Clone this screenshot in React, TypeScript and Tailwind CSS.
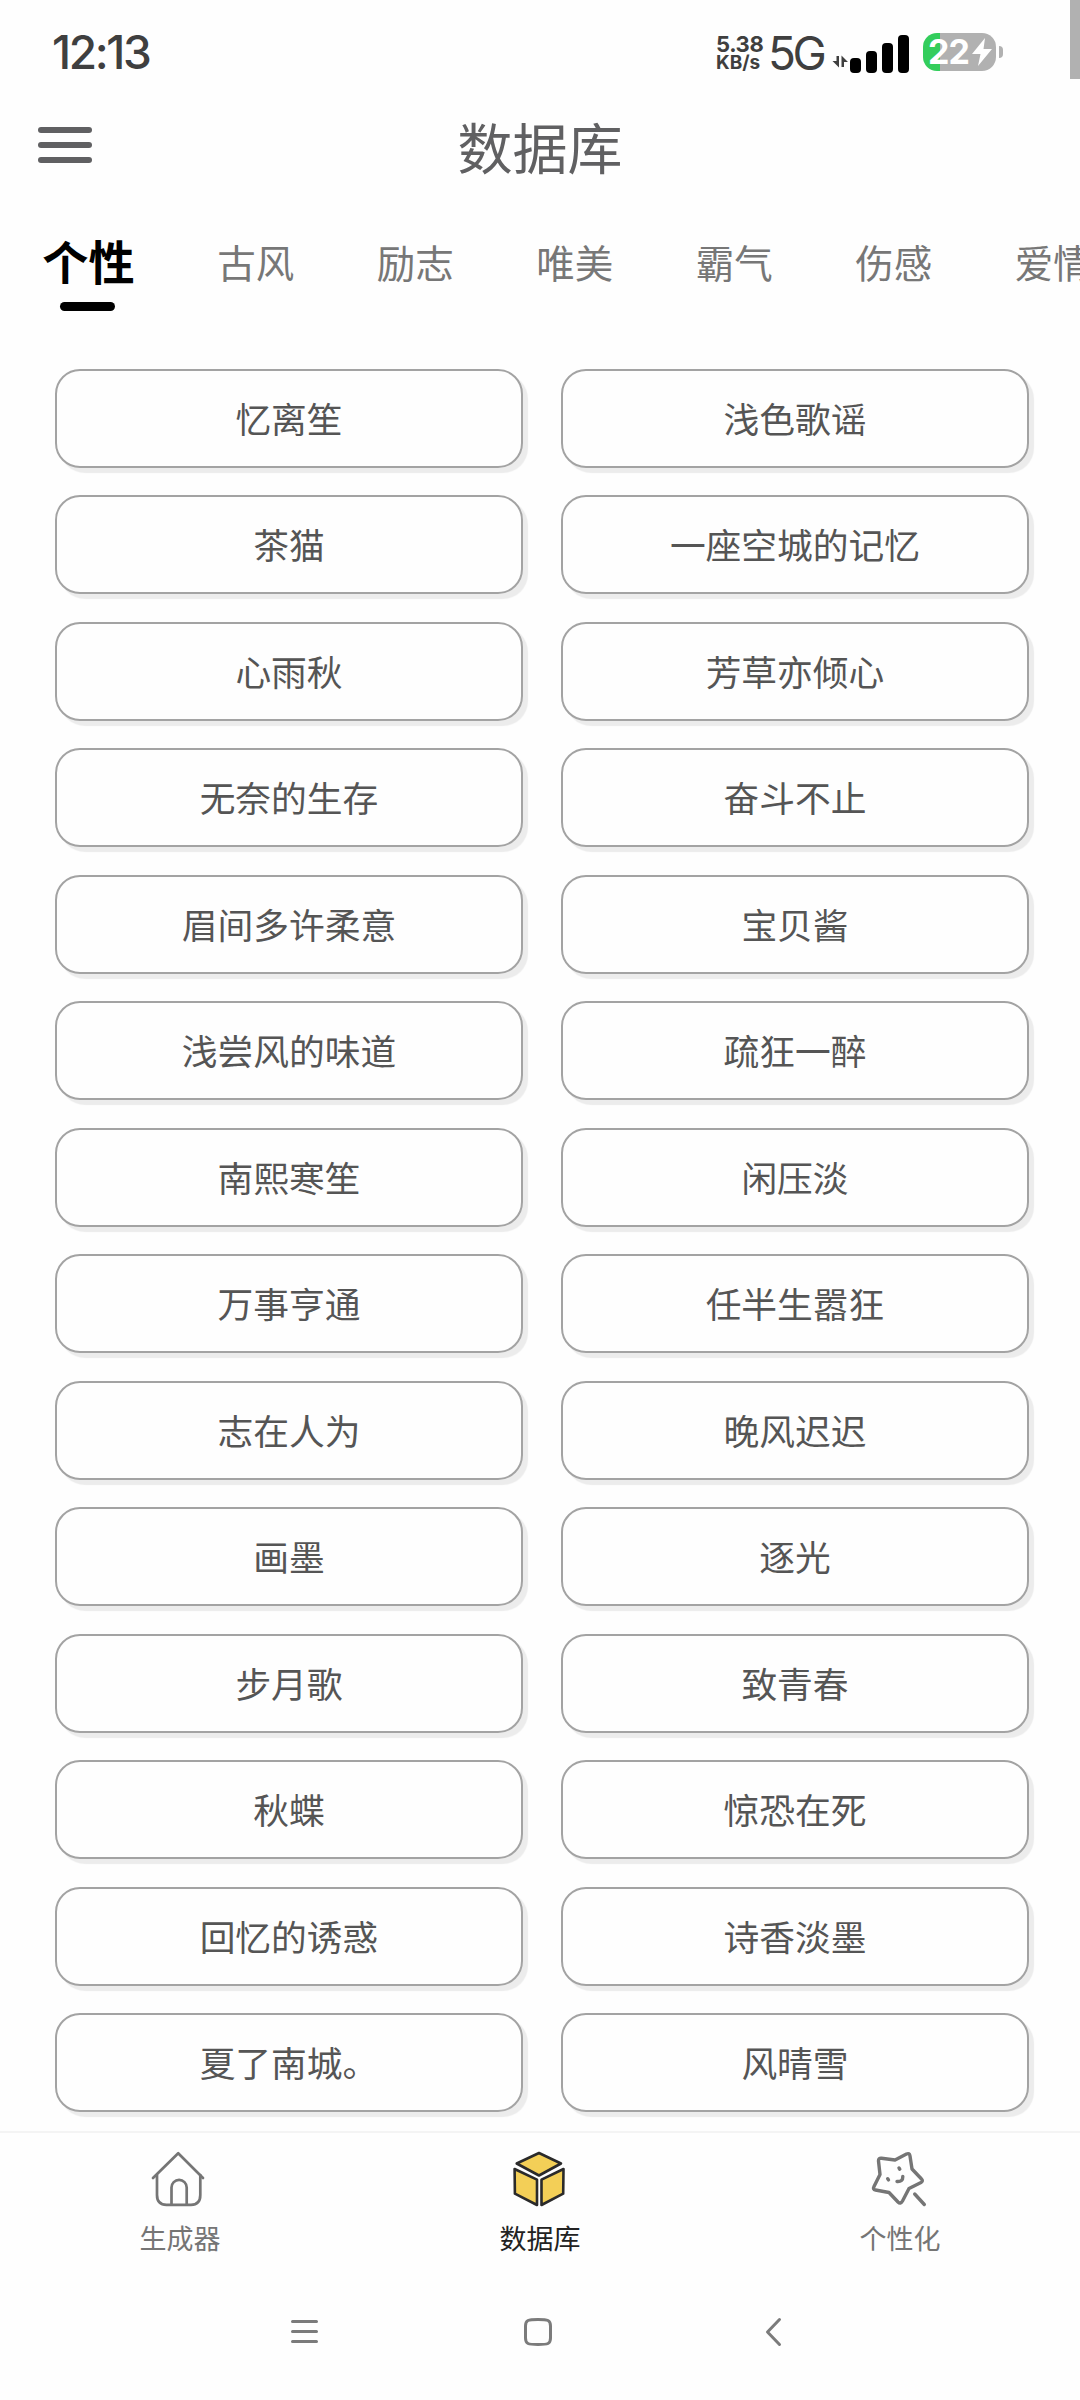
import { useState } from 'react';

const TABS = ['个性', '古风', '励志', '唯美', '霸气', '伤感', '爱情'];

const NAMES = [
  '忆离笙', '浅色歌谣',
  '茶猫', '一座空城的记忆',
  '心雨秋', '芳草亦倾心',
  '无奈的生存', '奋斗不止',
  '眉间多许柔意', '宝贝酱',
  '浅尝风的味道', '疏狂一醉',
  '南熙寒笙', '闲压淡',
  '万事亨通', '任半生嚣狂',
  '志在人为', '晚风迟迟',
  '画墨', '逐光',
  '步月歌', '致青春',
  '秋蝶', '惊恐在死',
  '回忆的诱惑', '诗香淡墨',
  '夏了南城。', '风晴雪',
];

function StatusBar() {
  return (
    <div className="h-[98px] shrink-0 flex items-start justify-between pl-[52px] font-['Inter','Noto_Sans_CJK_SC',sans-serif] text-[#3f3f3f]">
      <span className="mt-[27px] text-[46px] leading-[50px] font-medium tracking-[-2.4px]">12:13</span>
      <div className="flex items-start">
        <div className="mt-[34px] w-[52px] flex flex-col font-bold whitespace-nowrap">
          <span className="text-[22px] leading-[20px] tracking-[-0.4px]">5.38</span>
          <span className="text-[19px] leading-[18px]">KB/s</span>
        </div>
        <span className="mt-[28px] w-[64px] text-[46px] leading-[50px] tracking-[-3.5px]">5G</span>
        <svg className="mt-[55px] w-[16px] h-[13px]" viewBox="0 0 16 13" fill="#3f3f3f">
          <path d="M4.5 1H7v11.5L.5 6H4.500ZM9.500 12V.5L16 7H12V12Z" />
        </svg>
        <div className="ml-[2px] h-[73px] flex items-end gap-[5px]">
          <i className="w-[11px] h-[15px] rounded-[4px] bg-black" />
          <i className="w-[11px] h-[22px] rounded-[4px] bg-black" />
          <i className="w-[11px] h-[30px] rounded-[4px] bg-black" />
          <i className="w-[11px] h-[38px] rounded-[4px] bg-black" />
        </div>
        {/* Battery */}
        <div className="mt-[33px] ml-[14px] w-[73px] h-[38px] rounded-[14px] flex items-center pl-[5px] bg-[linear-gradient(to_right,#33cd5c_17px,#b1b1b1_17px)] text-white">
          <span className="w-[44px] text-[34px] leading-[38px] font-bold tracking-[-1px]">22</span>
          <svg className="-mt-px w-[20px] h-[28px] shrink-0" viewBox="0 0 20 28" fill="#fff">
            <path d="M13 0L0 16H8.500L6 28L20 11H11.500Z" />
          </svg>
        </div>
        <i className="mt-[46px] ml-[3px] w-[4px] h-[12px] rounded-r-[4px] bg-[#b1b1b1]" />
        {/* Scroll thumb */}
        <i className="ml-[67px] w-[10px] h-[79px] bg-[#b1b1b1]" />
      </div>
    </div>
  );
}

function HouseIcon() {
  return (
    <svg className="w-[60px] h-[60px] mr-1" viewBox="0 0 60 60" fill="none" stroke="#757575" strokeWidth="2.700" strokeLinecap="round" strokeLinejoin="round">
      <path d="M5 30L30.200 5.300L55 30" />
      <path d="M9 27V47Q9 56.800 18.500 56.800H43Q52.300 56.800 52.300 47V27" />
      <path d="M23.500 56.500V39.500A7.600 7.600 0 0 1 38.700 39.500V56.500" />
    </svg>
  );
}

function CubeIcon() {
  return (
    <svg className="w-[60px] h-[60px] mr-1" viewBox="0 0 60 60" fill="#f3cf57" stroke="#2a2a2a" strokeWidth="2.600" strokeLinejoin="round">
      <path d="M31 5L53 15.500L31 27.500L8.700 15.500Z" />
      <path d="M6.600 21L29 31.700V57L6.900 45.700Z" />
      <path d="M55.500 21L33.500 31.700V57L55.200 45.700Z" />
    </svg>
  );
}

function StarIcon() {
  return (
    <svg className="w-[60px] h-[60px] mr-1" viewBox="0 0 60 60" fill="none" stroke="#757575" strokeWidth="3.400" strokeLinecap="round" strokeLinejoin="round">
      <path d="M27 12L38.500 6Q41.500 4.700 42 8L44 21L53.500 31Q55.500 33 53 34.500L41 40.500L34.500 53Q32.500 56.500 30 54L21 44.500L7.500 42Q4.500 41.500 6 38.500L12 26.500L10.500 13Q10.300 10 13.500 10.300Z" />
      <path d="M31 20L31.800 21.200M19.700 30.700L20.500 31.900" />
      <path d="M29 33.500Q35 34 34.800 28.500" />
      <path d="M46.700 46L56.300 56.500" />
    </svg>
  );
}

const NAV = [
  { label: '生成器', Icon: HouseIcon },
  { label: '数据库', Icon: CubeIcon },
  { label: '个性化', Icon: StarIcon },
];

function App() {
  const [tab, setTab] = useState(0);
  const [page, setPage] = useState(1);

  return (
    <div className="w-[1080px] h-[2400px] flex flex-col overflow-hidden bg-[#fefefe] font-['Noto_Sans_CJK_SC',sans-serif]">
      <StatusBar />

      {/* Header */}
      <header className="h-[94px] shrink-0 grid grid-cols-3 items-center px-[38px]">
        <button className="w-[54px] flex flex-col gap-[9px]">
          <i className="h-[6px] rounded-[3px] bg-[#606062]" />
          <i className="h-[6px] rounded-[3px] bg-[#606062]" />
          <i className="h-[6px] rounded-[3px] bg-[#606062]" />
        </button>
        <h1 className="text-center text-[55px] leading-[80px] text-[#606062]">{NAV[page].label}</h1>
      </header>

      {/* Category tabs */}
      <nav className="h-[138px] shrink-0 flex overflow-hidden pl-px">
        {TABS.map((t, i) => (
          <button
            key={t}
            onClick={() => setTab(i)}
            className={`relative shrink-0 px-[41.25px] whitespace-nowrap ${i === tab ? 'pb-[2px] text-[46.2px] font-bold text-black' : 'pt-px text-[38.5px] text-[#777777]'}`}
          >
            {t}
            {i === tab && (
              <span className="absolute left-1/2 top-[110px] -ml-[28px] w-[55px] h-[9px] rounded-full bg-black" />
            )}
          </button>
        ))}
      </nav>

      {/* Name list */}
      <main className="flex-1 min-h-0 overflow-hidden pt-[39px] pl-[55px] pr-[51px]">
        <div className="grid grid-cols-2 gap-x-[38px] gap-y-[27.48px]">
          {NAMES.map(name => (
            <button
              key={name}
              className="h-[99px] rounded-[25px] border-2 border-[#a3a3a3] bg-[#fefefe] pb-px text-[35.75px] leading-[54px] text-[#555555] shadow-[5px_5px_1px_#ececec]"
            >
              {name}
            </button>
          ))}
        </div>
      </main>

      {/* Bottom navigation */}
      <nav className="h-[139px] shrink-0 grid grid-cols-3 border-t-2 border-[#f4f4f4]">
        {NAV.map(({ label, Icon }, i) => (
          <button
            key={label}
            onClick={() => setPage(i)}
            className={`flex flex-col items-center pt-[15px] text-[27px] leading-[40px] ${i === page ? 'text-[#222222]' : 'text-[#757575]'}`}
          >
            <Icon />
            <span className="mt-[10px]">{label}</span>
          </button>
        ))}
      </nav>

      {/* System navigation */}
      <div className="h-[130px] shrink-0 flex items-start pt-[46px] pl-[289px]">
        <svg className="w-[32px] h-[32px]" viewBox="0 0 32 32" fill="none" stroke="#7b7b7b" strokeWidth="3" strokeLinecap="round">
          <path d="M3.500 5.500H27.500M3.500 15.500H27.500M3.500 25.500H27.500" />
        </svg>
        <svg className="ml-[201px] w-[32px] h-[32px]" viewBox="0 0 32 32" fill="none" stroke="#7b7b7b" strokeWidth="3">
          <path d="M16 3.500C26 3.500 28.500 4 28.500 10V22C28.500 28 26 28.500 16 28.500S3.500 28 3.500 22V10C3.500 4 6 3.500 16 3.500Z" />
        </svg>
        <svg className="ml-[209px] w-[20px] h-[32px]" viewBox="0 0 20 32" fill="none" stroke="#7b7b7b" strokeWidth="3" strokeLinecap="round" strokeLinejoin="round">
          <path d="M16.500 3.500L4.500 16L16.500 28.500" />
        </svg>
      </div>
    </div>
  );
}

export default App;
